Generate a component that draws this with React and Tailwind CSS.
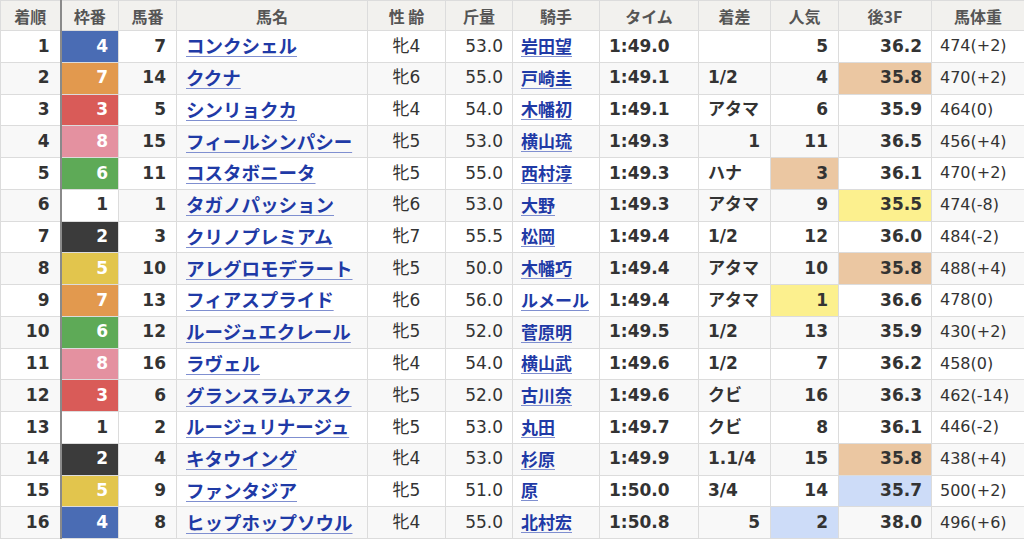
const FRAME = {
  1: "bg-white text-[#333]",
  2: "bg-[#3b3b3b] text-white",
  3: "bg-[#d95b58] text-white",
  4: "bg-[#4a6cb4] text-white",
  5: "bg-[#e2c54d] text-white",
  6: "bg-[#5eaa57] text-white",
  7: "bg-[#e2994e] text-white",
  8: "bg-[#e491a0] text-white",
};

const HL = {
  o: "bg-[#ebc7a2]",
  y: "bg-[#fcf08e]",
  b: "bg-[#cddcf8]",
};

const rows = [
  [1, 4, 7, "コンクシェル", "牝4", "53.0", "岩田望", "1:49.0", "", 5, "", "36.2", "", "474(+2)"],
  [2, 7, 14, "ククナ", "牝6", "55.0", "戸崎圭", "1:49.1", "1/2", 4, "", "35.8", "o", "470(+2)"],
  [3, 3, 5, "シンリョクカ", "牝4", "54.0", "木幡初", "1:49.1", "アタマ", 6, "", "35.9", "", "464(0)"],
  [4, 8, 15, "フィールシンパシー", "牝5", "53.0", "横山琉", "1:49.3", "1", 11, "", "36.5", "", "456(+4)"],
  [5, 6, 11, "コスタボニータ", "牝5", "55.0", "西村淳", "1:49.3", "ハナ", 3, "o", "36.1", "", "470(+2)"],
  [6, 1, 1, "タガノパッション", "牝6", "53.0", "大野", "1:49.3", "アタマ", 9, "", "35.5", "y", "474(-8)"],
  [7, 2, 3, "クリノプレミアム", "牝7", "55.5", "松岡", "1:49.4", "1/2", 12, "", "36.0", "", "484(-2)"],
  [8, 5, 10, "アレグロモデラート", "牝5", "50.0", "木幡巧", "1:49.4", "アタマ", 10, "", "35.8", "o", "488(+4)"],
  [9, 7, 13, "フィアスプライド", "牝6", "56.0", "ルメール", "1:49.4", "アタマ", 1, "y", "36.6", "", "478(0)"],
  [10, 6, 12, "ルージュエクレール", "牝5", "52.0", "菅原明", "1:49.5", "1/2", 13, "", "35.9", "", "430(+2)"],
  [11, 8, 16, "ラヴェル", "牝4", "54.0", "横山武", "1:49.6", "1/2", 7, "", "36.2", "", "458(0)"],
  [12, 3, 6, "グランスラムアスク", "牝5", "52.0", "古川奈", "1:49.6", "クビ", 16, "", "36.3", "", "462(-14)"],
  [13, 1, 2, "ルージュリナージュ", "牝5", "53.0", "丸田", "1:49.7", "クビ", 8, "", "36.1", "", "446(-2)"],
  [14, 2, 4, "キタウイング", "牝4", "53.0", "杉原", "1:49.9", "1.1/4", 15, "", "35.8", "o", "438(+4)"],
  [15, 5, 9, "ファンタジア", "牝5", "51.0", "原", "1:50.0", "3/4", 14, "", "35.7", "b", "500(+2)"],
  [16, 4, 8, "ヒップホップソウル", "牝4", "55.0", "北村宏", "1:50.8", "5", 2, "b", "38.0", "", "496(+6)"],
];

const heads = ["着順", "枠番", "馬番", "馬名", "性 齢", "斤量", "騎手", "タイム", "着差", "人気", "後3F", "馬体重"];
const widths = [60, 58, 58, 191, 78, 67, 87, 99, 72, 68, 93, 93];

export default function App() {
  return (
    <div className="w-[1024px] h-[540px] overflow-hidden bg-white font-['DejaVu_Sans','Noto_Sans_CJK_JP',sans-serif] text-[#333]">
      <table className="w-[1024px] table-fixed border-collapse">
        <colgroup>
          {widths.map((w, i) => (
            <col key={i} style={{ width: w }} />
          ))}
        </colgroup>
        <thead>
          <tr className="h-[30px] bg-[#f2f1ee]">
            {heads.map((h, i) => (
              <th
                key={h}
                className={
                  "border border-[#dcdcdc] text-[16px] font-bold text-[#555] text-center whitespace-pre font-['Noto_Sans_CJK_JP','DejaVu_Sans',sans-serif] " +
                  (i === 1 ? "border-l-2 border-l-[#8a8a8a]" : "")
                }
              >
                {h}
              </th>
            ))}
          </tr>
        </thead>
        <tbody>
          {rows.map((r, idx) => {
            const [pos, frame, num, name, sex, kin, jockey, time, diff, pop, popHl, last3f, lastHl, weight] = r;
            const diffIsNum = /^\d+$/.test(diff);
            return (
              <tr key={pos} className={"h-[31.75px] " + (idx % 2 === 1 ? "bg-[#f8f8f8]" : "bg-white")}>
                <td className="border border-[#dcdcdc] text-right pr-[10px] text-[17px] font-bold">{pos}</td>
                <td className={"border border-[#dcdcdc] border-l-2 border-l-[#8a8a8a] text-right pr-[10px] text-[17px] font-bold " + FRAME[frame]}>
                  {frame}
                </td>
                <td className="border border-[#dcdcdc] text-right pr-[10px] text-[17px] font-bold">{num}</td>
                <td className="border border-[#dcdcdc] pl-[9px] whitespace-nowrap">
                  <a href="#" className="text-[18.5px] font-bold text-[#1f3aa6] underline decoration-[#7f8fd0] underline-offset-[3px] font-['Noto_Sans_CJK_JP',sans-serif]">
                    {name}
                  </a>
                </td>
                <td className="border border-[#dcdcdc] text-center text-[17px]">{sex}</td>
                <td className="border border-[#dcdcdc] text-right pr-[9px] text-[17px]">{kin}</td>
                <td className="border border-[#dcdcdc] pl-[8px] whitespace-nowrap">
                  <a href="#" className="text-[17px] font-bold text-[#1f3aa6] underline decoration-[#7f8fd0] underline-offset-[3px] font-['Noto_Sans_CJK_JP',sans-serif]">
                    {jockey}
                  </a>
                </td>
                <td className="border border-[#dcdcdc] pl-[9px] text-[17px] font-bold">{time}</td>
                <td className={"border border-[#dcdcdc] text-[17px] font-bold whitespace-nowrap " + (diffIsNum ? "text-right pr-[10px]" : "pl-[9px]")}>
                  {diff}
                </td>
                <td className={"border border-[#dcdcdc] text-right pr-[10px] text-[17px] font-bold " + (HL[popHl] || "")}>{pop}</td>
                <td className={"border border-[#dcdcdc] text-right pr-[9px] text-[17px] font-bold " + (HL[lastHl] || "")}>{last3f}</td>
                <td className="border border-[#dcdcdc] pl-[8px] text-[16px] whitespace-nowrap">{weight}</td>
              </tr>
            );
          })}
        </tbody>
      </table>
    </div>
  );
}
